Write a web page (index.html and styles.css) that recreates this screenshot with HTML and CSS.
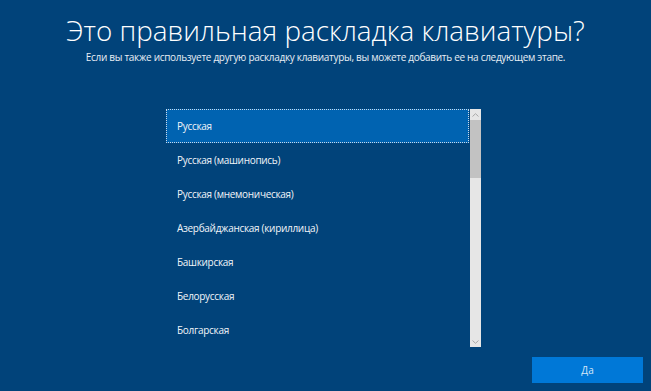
FILE: index.html
```html
<!DOCTYPE html>
<html lang="ru">
<head>
<meta charset="utf-8">
<link rel="stylesheet" href="styles.css">
</head>
<body>
<div class="page">
  <header class="head">
    <h1 class="title">Это правильная раскладка клавиатуры?</h1>
    <p class="subtitle">Если вы также используете другую раскладку клавиатуры, вы можете добавить ее на следующем этапе.</p>
  </header>
  <div class="listbox">
    <ul class="items">
      <li class="item selected">Русская</li>
      <li class="item">Русская (машинопись)</li>
      <li class="item">Русская (мнемоническая)</li>
      <li class="item">Азербайджанская (кириллица)</li>
      <li class="item">Башкирская</li>
      <li class="item">Белорусская</li>
      <li class="item">Болгарская</li>
    </ul>
    <div class="scrollbar">
      <div class="arrow"><svg width="7" height="4" viewBox="0 0 7 4"><path d="M0.5 3.5 L3.5 0.7 L6.5 3.5" fill="none" stroke="#a8a8a8" stroke-width="1"/></svg></div>
      <div class="thumb"></div>
      <div class="track"></div>
      <div class="arrow"><svg width="7" height="4" viewBox="0 0 7 4"><path d="M0.5 0.5 L3.5 3.3 L6.5 0.5" fill="none" stroke="#a8a8a8" stroke-width="1"/></svg></div>
    </div>
  </div>
  <footer class="foot">
    <button class="btn">Да</button>
  </footer>
</div>
</body>
</html>
```
FILE: styles.css
```css
html, body {
  margin: 0;
  padding: 0;
}
body {
  background: #01437a;
  font-family: "Open Sans", "Liberation Sans", sans-serif;
  color: #fff;
}
.page {
  height: 391px;
  display: flex;
  flex-direction: column;
}
.head {
  text-align: center;
  padding-top: 11px;
}
.title {
  margin: 0;
  font-weight: 300;
  font-size: 27.8px;
  line-height: 38px;
  letter-spacing: 0;
}
.subtitle {
  margin: 1px 0 0;
  font-size: 10px;
  letter-spacing: -0.3px;
  line-height: 14px;
  color: #e8eef5;
}
.listbox {
  display: flex;
  margin-top: 45px;
  margin-left: 166px;
  width: 315px;
  height: 238px;
}
.items {
  list-style: none;
  margin: 0;
  padding: 0;
  flex: 1;
}
.item {
  height: 34px;
  line-height: 34px;
  padding-left: 11px;
  font-size: 10px;
  letter-spacing: -0.3px;
  color: #f2f5f9;
  box-sizing: border-box;
}
.item.selected {
  background: #0063b1;
  border: 1px dotted #c9d9ea;
  line-height: 32px;
  padding-left: 10px;
}
.scrollbar {
  width: 11px;
  margin-left: 1px;
  background: #e6e6e6;
  display: flex;
  flex-direction: column;
}
.arrow {
  height: 11px;
  display: flex;
  align-items: center;
  justify-content: center;
}
.thumb {
  height: 58px;
  background: #c2c2c2;
}
.track {
  flex: 1;
}
.foot {
  margin-top: auto;
  display: flex;
  justify-content: flex-end;
  padding: 0 8px 8px 0;
}
.btn {
  width: 111px;
  height: 26px;
  border: none;
  background: #0078d7;
  color: #d6e7f7;
  font-family: "Open Sans", "Liberation Sans", sans-serif;
  font-size: 10px;
  padding: 0;
}
```
